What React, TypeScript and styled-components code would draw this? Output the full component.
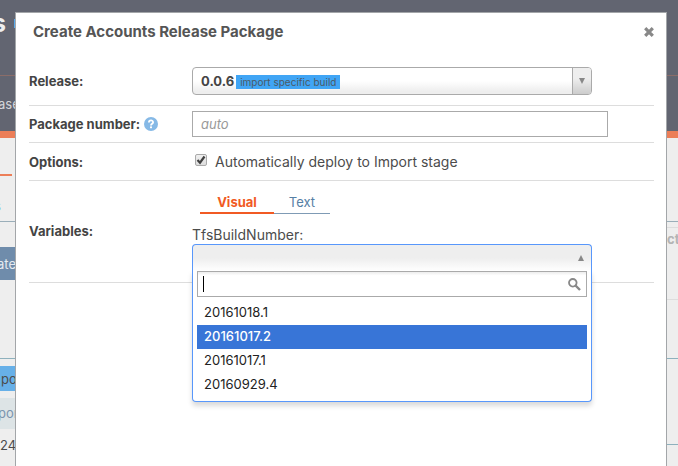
import React, { useState } from "react";
import styled, { createGlobalStyle, css } from "styled-components";

const GlobalStyle = createGlobalStyle`
  *, *::before, *::after { box-sizing: border-box; }
  html, body { margin: 0; background: #eeeeee; overflow: hidden; }
  body, button, input { font-family: Inter, "Liberation Sans", sans-serif; font-size: 13px; line-height: 20px; color: #4c4c4c; }
  button, input { margin: 0; padding: 0; border: 0; background: none; }
  a { text-decoration: none; }
`;

/* ---------- page behind the dialog ---------- */

const Page = styled.div`
  min-height: 100vh;
  overflow: hidden;
`;

const Masthead = styled.header`
  display: flex;
  height: 76px;
  padding-top: 6px;
  background: #626571;
  border-bottom: 1px solid #8b6d69;
`;

const ProjectName = styled.h1`
  margin: 0;
  width: 14px;
  font-size: 25px;
  line-height: 34px;
  color: #eeeeee;
  text-indent: -8px;
`;

const StatusMark = styled.span`
  width: 10px;
  height: 9px;
  margin-top: 13px;
  background: #58a9ea;
`;

const MainNav = styled.nav`
  height: 62px;
  padding-top: 18px;
  background: #626571;
  border-bottom: 7px solid #ec7e58;
`;

const NavLink = styled.a`
  margin-left: -2px;
  color: #d5d6da;
`;

const Columns = styled.div`
  display: grid;
  grid-template-columns: 15px 1fr 11px;
`;

const Column = styled.div`
  overflow: hidden;
  white-space: nowrap;
`;

const Band = styled.div<{ $height: number; $line?: string }>`
  height: ${(p) => p.$height}px;
  border-bottom: ${(p) => (p.$line ? `1px solid ${p.$line}` : "0")};
`;

const ActiveTabLine = styled.div`
  width: 12px;
  height: 38px;
  border-bottom: 2px solid #ec7e58;
`;

const EdgeLink = styled(Band).attrs({ as: "a", href: "#" })`
  display: block;
  padding-top: 20px;
  text-indent: -6px;
  color: #58a9ea;
`;

const CreateButton = styled.button`
  display: block;
  height: 33px;
  margin-top: 25px;
  color: #e6ebf0;
  background: #6f8cab;
  width: 100%;
  text-align: left;
  text-indent: -3px;
`;

const StageTag = styled.div`
  height: 25px;
  margin: 7px 0;
  padding-top: 3px;
  text-indent: 1px;
  background: #67b0e8;
`;

const StageRow = styled.a`
  display: block;
  height: 31px;
  padding-top: 5px;
  text-indent: -2px;
  color: #7b95af;
  background: #dde4e6;
`;

const Count = styled.div`
  padding-top: 6px;
`;

const ColumnHeading = styled(Band)`
  font-weight: 700;
  color: #b4b4b4;
  padding-top: 1px;
`;

/* ---------- dialog ---------- */

const Dialog = styled.section`
  position: fixed;
  top: 12px;
  left: 15px;
  right: 11px;
  bottom: 0;
  padding: 0 12px 0 13px;
  background: #ffffff;
  border: 1px solid #a3a6a9;
  border-bottom: 0;
`;

const DialogHeader = styled.div`
  display: flex;
  justify-content: space-between;
  align-items: center;
  height: 44px;
  padding: 0 0 6px 4px;
`;

const DialogTitle = styled.h2`
  margin: 0;
  font-size: 15px;
  line-height: 20px;
  font-weight: 700;
  color: #555555;
`;

const CloseButton = styled.button`
  display: flex;
  width: 10px;
  height: 10px;
  color: #888888;
  cursor: pointer;
`;

const FormRow = styled.div<{ $pad: string }>`
  display: grid;
  grid-template-columns: 163px minmax(0, 1fr);
  align-items: center;
  padding: ${(p) => p.$pad};
  border-bottom: 1px solid #dddddd;
`;

const Caption = styled.div`
  display: flex;
  align-items: center;
  gap: 4px;
  font-weight: 700;
  color: #444444;
`;

const HelpLink = styled.a`
  display: flex;
`;

const chosenBox = css`
  display: flex;
  width: 100%;
  height: 28px;
  border: 1px solid #aaaaaa;
  border-radius: 4px;
  overflow: hidden;
  cursor: pointer;
`;

const Picker = styled.div`
  position: relative;
  width: 400px;
  max-width: 100%;
`;

const ReleaseButton = styled.button`
  ${chosenBox}
  align-items: center;
  padding-left: 8px;
  background: linear-gradient(#ffffff 50%, #eeeeee 90%);
`;

const Version = styled.span`
  font-weight: 700;
  color: #444444;
`;

const BuildTag = styled.span`
  height: 14px;
  margin: 1px 0 0 2px;
  padding: 0 4px;
  font-size: 10px;
  line-height: 14px;
  color: #4c5a66;
  background: #40a5f5;
`;

const ArrowCell = styled.span`
  display: flex;
  justify-content: center;
  align-items: center;
  width: 19px;
  height: 100%;
  margin-left: auto;
  padding-right: 1px;
  border-left: 1px solid #aaaaaa;
  background: linear-gradient(#eeeeee 40%, #cccccc);
`;

const PackageInput = styled.input`
  width: 416px;
  max-width: 100%;
  height: 26px;
  padding: 0 8px;
  border: 1px solid #aaaaaa;
  &::placeholder { color: #999999; font-style: italic; opacity: 1; }
`;

const CheckLabel = styled.label`
  display: flex;
  align-items: center;
  gap: 8px;
  padding-left: 3px;
  font-size: 14px;
`;

const CheckFrame = styled.span`
  display: grid;
  height: 12px;
  margin-bottom: 4px;
  > * { grid-area: 1 / 1; }
  > svg { pointer-events: none; }
`;

const CheckInput = styled.input`
  appearance: none;
  width: 12px;
  height: 12px;
  border: 1px solid #aaaaaa;
  border-radius: 2px;
  background: linear-gradient(#f0f0f0, #dddddd);
  &:not(:checked) + svg { visibility: hidden; }
`;

const TabList = styled.div`
  display: flex;
  margin: 0 0 11px 8px;
`;

const Tab = styled.button<{ $active: boolean }>`
  width: ${(p) => (p.$active ? 74 : 56)}px;
  height: 24px;
  padding-bottom: 1px;
  font-weight: ${(p) => (p.$active ? 700 : 400)};
  color: ${(p) => (p.$active ? "#f15a24" : "#5680a5")};
  box-shadow: inset 0 ${(p) => (p.$active ? "-2px #f15a24" : "-1px #7f9bb5")};
`;

const VariableLabel = styled.label`
  display: block;
  height: 19px;
  font-size: 14px;
`;

const VariableButton = styled.button`
  ${chosenBox}
  justify-content: flex-end;
  align-items: center;
  padding-right: 7px;
  border-color: #5897fb;
  border-bottom-color: transparent;
  border-radius: 4px 4px 0 0;
  background: linear-gradient(#eeeeee 50%, #ffffff);
`;

const Menu = styled.div`
  position: absolute;
  top: 26px;
  left: 0;
  right: 0;
  padding: 1px 4px 4px;
  background: #ffffff;
  border: 1px solid #5897fb;
  border-top: 0;
  border-radius: 0 0 4px 4px;
  box-shadow: 0 4px 5px rgba(0, 0, 0, 0.15);
`;

const SearchBox = styled.div`
  display: flex;
  align-items: center;
  height: 26px;
  padding: 0 5px;
  border: 1px solid #aaaaaa;
  background: linear-gradient(#eeeeee 1%, #ffffff 15%);
`;

const Caret = styled.span`
  width: 1px;
  height: 16px;
  background: #000000;
`;

const SearchInput = styled.input`
  flex: 1;
  min-width: 0;
  outline: 0;
`;

const Options = styled.ul`
  margin: 4px 0 0;
  padding: 0;
  list-style: none;
`;

const Option = styled.li<{ $active: boolean }>`
  height: 24px;
  padding: 0 7px;
  line-height: 23px;
  font-weight: ${(p) => (p.$active ? 500 : 400)};
  color: ${(p) => (p.$active ? "#ffffff" : "#222222")};
  background: ${(p) => (p.$active ? "#3875d7" : "transparent")};
`;

const Triangle = ({ up = false }: { up?: boolean }) => (
  <svg width="6" height="6" viewBox="0 0 6 6" aria-hidden="true">
    <path d={up ? "M3 0L6 6H0Z" : "M0 0H6L3 6Z"} fill="#888888" />
  </svg>
);

const builds = ["20161018.1", "20161017.2", "20161017.1", "20160929.4"];

export default function App() {
  const [tab, setTab] = useState("Visual");
  const [active, setActive] = useState("20161017.2");
  const [deploy, setDeploy] = useState(true);

  return (
    <>
      <GlobalStyle />
      <Page>
        <Masthead>
          <ProjectName>s</ProjectName>
          <StatusMark />
        </Masthead>
        <MainNav>
          <NavLink href="#">ase</NavLink>
        </MainNav>
        <Columns>
          <Column>
            <ActiveTabLine />
            <EdgeLink $height={46} $line="#9aaeb9">s</EdgeLink>
            <CreateButton>ate</CreateButton>
            <Band $height={79} $line="#8eb1bd" />
            <StageTag>po</StageTag>
            <StageRow href="#">por</StageRow>
            <Count>24</Count>
          </Column>
          <div />
          <Column>
            <Band $height={84} $line="#9aaeb9" />
            <Band $height={6} $line="#dddddd" />
            <ColumnHeading $height={72} $line="#dddddd">ct</ColumnHeading>
            <Band $height={59} $line="#8eb1bd" />
            <Band $height={86} $line="#8eb1bd" />
          </Column>
        </Columns>
      </Page>

      <Dialog role="dialog" aria-labelledby="dialog-title">
        <DialogHeader>
          <DialogTitle id="dialog-title">Create Accounts Release Package</DialogTitle>
          <CloseButton aria-label="Close">
            <svg width="10" height="10" viewBox="0 0 10 10">
              <path d="M1.2 1.2L8.8 8.8M8.8 1.2L1.2 8.8" stroke="currentColor" strokeWidth="3.2" />
            </svg>
          </CloseButton>
        </DialogHeader>

        <FormRow $pad="10px 0">
          <Caption id="release-label">Release:</Caption>
          <Picker>
            <ReleaseButton aria-haspopup="listbox" aria-labelledby="release-label">
              <Version>0.0.6</Version>
              <BuildTag>import specific build</BuildTag>
              <ArrowCell><Triangle /></ArrowCell>
            </ReleaseButton>
          </Picker>
        </FormRow>

        <FormRow $pad="5px 0">
          <Caption>
            <label htmlFor="package-number">Package number:</label>
            <HelpLink href="#" aria-label="Help">
              <svg width="14" height="14" viewBox="0 0 14 14">
                <circle cx="7" cy="7" r="7" fill="#86b9e6" />
                <path d="M4.9 5.5C4.9 2.8 9.1 2.8 9.1 5.3C9.1 6.8 7 6.8 7 8.4" fill="none" stroke="#ffffff" strokeWidth="1.8" />
                <rect x="6" y="9.4" width="2" height="1.8" fill="#ffffff" />
              </svg>
            </HelpLink>
          </Caption>
          <PackageInput id="package-number" placeholder="auto" />
        </FormRow>

        <FormRow $pad="9px 0 8px">
          <Caption>Options:</Caption>
          <CheckLabel>
            <CheckFrame>
              <CheckInput type="checkbox" checked={deploy} onChange={(e) => setDeploy(e.target.checked)} />
              <svg width="12" height="12" viewBox="0 0 12 12" aria-hidden="true">
                <path d="M2.5 6L5 8.7L9.5 2.5" fill="none" stroke="#404040" strokeWidth="2.2" />
              </svg>
            </CheckFrame>
            Automatically deploy to Import stage
          </CheckLabel>
        </FormRow>

        <FormRow $pad="9px 0 10px">
          <Caption>Variables:</Caption>
          <div>
            <TabList role="tablist">
              {["Visual", "Text"].map((name) => (
                <Tab key={name} role="tab" aria-selected={tab === name} $active={tab === name} onClick={() => setTab(name)}>
                  {name}
                </Tab>
              ))}
            </TabList>
            <VariableLabel htmlFor="build-number">TfsBuildNumber:</VariableLabel>
            <Picker>
              <VariableButton id="build-number" aria-haspopup="listbox" aria-expanded="true">
                <Triangle up />
              </VariableButton>
              <Menu>
                <SearchBox>
                  <Caret />
                  <SearchInput type="text" aria-label="Search builds" />
                  <svg width="13" height="13" viewBox="0 0 13 13" aria-hidden="true">
                    <circle cx="4.8" cy="4.8" r="3.8" fill="none" stroke="#888888" strokeWidth="1.8" />
                    <path d="M7.5 7.5L12 12" stroke="#888888" strokeWidth="2.4" />
                  </svg>
                </SearchBox>
                <Options role="listbox">
                  {builds.map((build) => (
                    <Option key={build} role="option" aria-selected={build === active} $active={build === active} onMouseEnter={() => setActive(build)}>
                      {build}
                    </Option>
                  ))}
                </Options>
              </Menu>
            </Picker>
          </div>
        </FormRow>
      </Dialog>
    </>
  );
}
